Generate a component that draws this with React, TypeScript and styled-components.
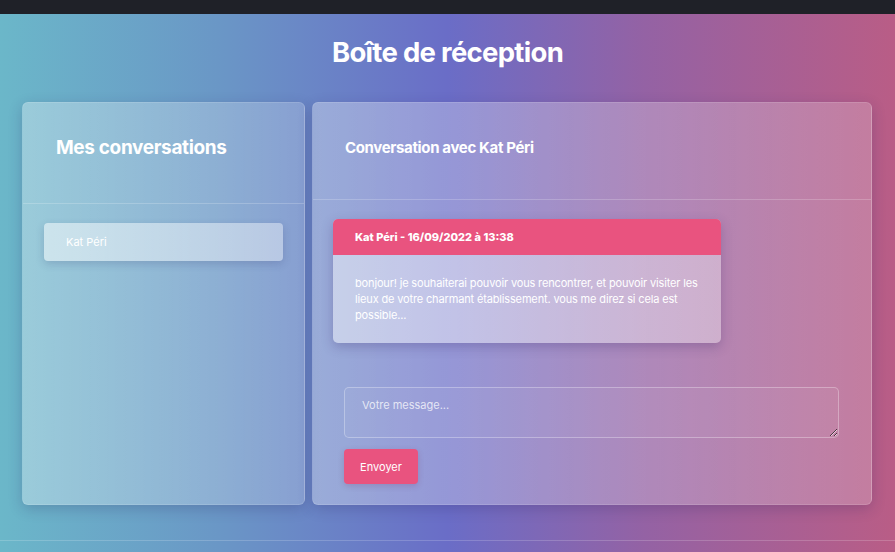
import React from "react";
import styled, { createGlobalStyle } from "styled-components";

const Global = createGlobalStyle`
  html, body { margin: 0; padding: 0; }
  body {
    font-family: Inter, "Liberation Sans", Arial, sans-serif;
    background: linear-gradient(90deg, #6bb7c9 0%, #6a96c6 25%, #6a6dc7 50%, #9462a4 72%, #b95d86 100%);
    min-height: 552px;
    color: #fff;
  }
`;

const Page = styled.div`
  min-height: 552px;
  display: flex;
  flex-direction: column;
`;

const TopBar = styled.div`
  height: 14px;
  background: #1f2128;
`;

const Title = styled.h1`
  margin: 0;
  height: 88px;
  box-sizing: border-box;
  padding-bottom: 12px;
  display: flex;
  align-items: center;
  justify-content: center;
  font-size: 27.5px;
  font-weight: 700;
  letter-spacing: -0.7px;
  color: #fff;
`;

const Main = styled.main`
  display: flex;
  gap: 7px;
  padding: 0 23px 0 22px;
  height: 403px;
`;

const Card = styled.section<{ $width?: number }>`
  ${(p) => (p.$width ? `width: ${p.$width}px; flex: none;` : "flex: 1;")}
  display: flex;
  flex-direction: column;
  border-radius: 6px;
  background: linear-gradient(90deg, rgba(255,255,255,0.32), rgba(255,255,255,0.2));
  border: 1px solid rgba(255,255,255,0.12);
  box-shadow: 0 4px 14px rgba(40, 30, 90, 0.22);
  box-sizing: border-box;
`;

const CardHeader = styled.header<{ $h: number; $pad: number; $size: number }>`
  height: ${(p) => p.$h}px;
  flex: none;
  box-sizing: border-box;
  display: flex;
  align-items: center;
  padding-left: ${(p) => p.$pad}px;
  padding-bottom: ${(p) => p.$h - 90}px;
  border-bottom: 1px solid rgba(255,255,255,0.2);
  font-size: ${(p) => p.$size}px;
  font-weight: 700;
  letter-spacing: -0.35px;
`;

const List = styled.div`
  padding: 19px 21px;
`;

const ConvItem = styled.div`
  height: 38px;
  display: flex;
  align-items: center;
  padding-left: 22px;
  border-radius: 4px;
  background: linear-gradient(90deg, rgba(255,255,255,0.5), rgba(255,255,255,0.4));
  box-shadow: 0 3px 8px rgba(40, 40, 100, 0.18);
  font-size: 11px;
  color: #fff;
`;

const Body = styled.div`
  padding: 19px 32px 20px 20px;
  display: flex;
  flex-direction: column;
  flex: 1;
`;

const Message = styled.article`
  width: 388px;
  border-radius: 5px;
  overflow: hidden;
  background: linear-gradient(90deg, rgba(255,255,255,0.45), rgba(255,255,255,0.35));
  box-shadow: 0 4px 12px rgba(50, 30, 100, 0.25);
`;

const MessageHead = styled.div`
  height: 36px;
  display: flex;
  align-items: center;
  padding-left: 22px;
  background: #e9537f;
  font-size: 11px;
  font-weight: 800;
`;

const MessageText = styled.p`
  margin: 0;
  padding: 20px 18px 20px 22px;
  font-size: 11px;
  line-height: 16px;
  letter-spacing: -0.15px;
  color: #fff;
`;

const Form = styled.form`
  margin-top: auto;
  padding-left: 11px;
  display: flex;
  flex-direction: column;
  align-items: flex-start;
  gap: 11px;
`;

const TextArea = styled.textarea`
  width: 100%;
  height: 51px;
  box-sizing: border-box;
  border-radius: 5px;
  border: 1px solid rgba(255,255,255,0.3);
  background: rgba(255,255,255,0.04);
  padding: 10px 17px;
  font-family: inherit;
  font-size: 11px;
  color: #fff;
  outline: none;
  &::placeholder { color: rgba(255,255,255,0.75); }
`;

const Button = styled.button`
  width: 74px;
  height: 35px;
  border: none;
  border-radius: 4px;
  background: #e9537f;
  color: #fff;
  font-family: inherit;
  font-size: 11px;
  box-shadow: 0 2px 6px rgba(120, 30, 80, 0.2);
`;

const Footer = styled.footer`
  margin-top: 35px;
  border-top: 1px solid rgba(255,255,255,0.18);
  height: 11px;
`;

export default function App() {
  return (
    <Page>
      <Global />
      <TopBar />
      <Title>Boîte de réception</Title>
      <Main>
        <Card $width={283}>
          <CardHeader $h={101} $pad={33} $size={19}>Mes conversations</CardHeader>
          <List>
            <ConvItem>Kat Péri</ConvItem>
          </List>
        </Card>
        <Card>
          <CardHeader $h={97} $pad={32} $size={15}>Conversation avec Kat Péri</CardHeader>
          <Body>
            <Message>
              <MessageHead>Kat Péri - 16/09/2022 à 13:38</MessageHead>
              <MessageText>
                bonjour! je souhaiterai pouvoir vous rencontrer, et pouvoir visiter les lieux de votre charmant établissement. vous me direz si cela est possible...
              </MessageText>
            </Message>
            <Form onSubmit={(e) => e.preventDefault()}>
              <TextArea placeholder="Votre message..." />
              <Button type="submit">Envoyer</Button>
            </Form>
          </Body>
        </Card>
      </Main>
      <Footer />
    </Page>
  );
}
